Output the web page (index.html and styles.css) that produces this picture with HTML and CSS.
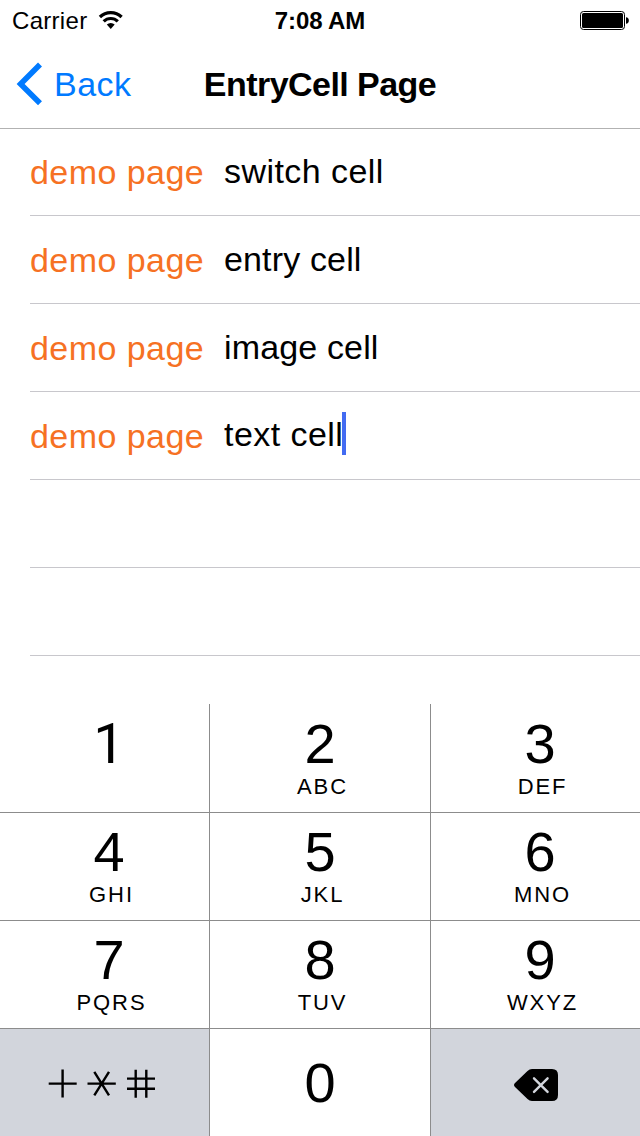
FILE: index.html
```html
<!DOCTYPE html>
<html lang="en">
<head>
<meta charset="utf-8">
<title>EntryCell Page</title>
<link rel="stylesheet" href="styles.css">
</head>
<body>
<div class="screen">
  <header class="header">
    <div class="status">
      <div class="status-left">
        <span class="carrier">Carrier</span>
        <svg class="wifi" width="26" height="20" viewBox="0 0 26 20">
          <g fill="none" stroke="#000" stroke-width="3.2">
            <path d="M1.9 7a15.400 15.400 0 0 1 21.700 0"/>
            <path d="M5.700 11.400a10 10 0 0 1 14.100 0"/>
          </g>
          <path d="M8.800 14.600a5.900 5.900 0 0 1 7.900 0L12.750 18.900z"/>
        </svg>
      </div>
      <div class="clock">7:08 AM</div>
      <div class="status-right">
        <svg width="50" height="20" viewBox="0 0 50 20">
          <rect x=".5" y=".5" width="44" height="18" rx="3" fill="none" stroke="#000"/>
          <rect x="2" y="2" width="41" height="15" rx="1.5"/>
          <path d="M46 6.2c3.8 0 3.8 6.6 0 6.6z"/>
        </svg>
      </div>
    </div>
    <nav class="nav">
      <a class="back">
        <svg width="27" height="44" viewBox="0 0 27 44"><path d="M25 2.500L5.600 21.900L25 41.300" fill="none" stroke="#007aff" stroke-width="5.600"/></svg>
        <span>Back</span>
      </a>
      <h1 class="title">EntryCell Page</h1>
    </nav>
  </header>
  <main class="table">
    <div class="row"><span class="label">demo page</span><span class="entry">switch cell</span></div>
    <div class="row"><span class="label">demo page</span><span class="entry tight">entry cell</span></div>
    <div class="row"><span class="label">demo page</span><span class="entry tight">image cell</span></div>
    <div class="row"><span class="label">demo page</span><span class="entry editing">text cell</span><span class="caret"></span></div>
    <div class="row"></div>
    <div class="row"></div>
  </main>
  <section class="keypad">
    <div class="key left"><span class="digit one">1</span></div>
    <div class="key"><span class="digit">2</span><span class="letters">ABC</span></div>
    <div class="key right"><span class="digit">3</span><span class="letters">DEF</span></div>
    <div class="key left"><span class="digit">4</span><span class="letters">GHI</span></div>
    <div class="key"><span class="digit">5</span><span class="letters">JKL</span></div>
    <div class="key right"><span class="digit">6</span><span class="letters">MNO</span></div>
    <div class="key left"><span class="digit">7</span><span class="letters">PQRS</span></div>
    <div class="key"><span class="digit">8</span><span class="letters">TUV</span></div>
    <div class="key right"><span class="digit">9</span><span class="letters">WXYZ</span></div>
    <div class="key gray symbols">
      <svg width="108" height="30" viewBox="0 0 108 30">
        <g fill="none" stroke="#000" stroke-width="2.4">
          <path d="M.7 14.600h28M14.600 .6v28"/>
          <path d="M39.500 14.600h28.300M46.300 2.800l14.700 23.600M61 2.800L46.300 26.400"/>
          <path d="M79 9.600h28M79 19.700h28M87.700 .8v28M98.300 .8v28"/>
        </g>
      </svg>
    </div>
    <div class="key zero"><span class="digit">0</span></div>
    <div class="key gray delete">
      <svg width="44" height="32" viewBox="0 0 44 32">
        <path d="M18 0h20q6 0 6 6v20q0 6-6 6H18q-2.500 0-4.500-2L1 18q-2-2 0-4L13.500 2Q15.500 0 18 0z"/>
        <path d="M20 9.300l13.600 13.600M33.600 9.300L20 22.900" fill="none" stroke="#d2d5dc" stroke-width="2.400" stroke-linecap="round"/>
      </svg>
    </div>
  </section>
</div>
</body>
</html>
```
FILE: styles.css
```css
* { box-sizing: border-box; }
body {
  margin: 0;
  background: #fff;
  color: #000;
  font-family: "Liberation Sans", Arial, sans-serif;
}
.screen {
  width: 640px;
  height: 1136px;
  display: flex;
  flex-direction: column;
  overflow: hidden;
}
.header {
  height: 129px;
  flex: none;
  margin-bottom: -1px;
  border-bottom: 1px solid #b2b2b2;
}
.status {
  height: 40px;
  display: grid;
  grid-template-columns: 1fr auto 1fr;
  font-size: 24px;
  line-height: 41px;
}
.status-left { display: flex; padding-left: 12px; }
.carrier { width: 86px; letter-spacing: .3px; }
.wifi { margin-top: 10px; }
.clock { font-weight: 700; letter-spacing: -.1px; }
.status-right { display: flex; justify-content: flex-end; padding: 11px 10px 0 0; }
.nav {
  height: 88px;
  display: grid;
  grid-template-columns: 1fr auto 1fr;
  font-size: 34px;
  line-height: 88px;
}
.back {
  display: flex;
  align-items: center;
  padding-left: 15px;
  color: #007aff;
}
.back span { margin-left: 12px; letter-spacing: .5px; }
.title {
  margin: 0;
  font-size: 34px;
  font-weight: 700;
  letter-spacing: -.55px;
}
.table { height: 576px; flex: none; padding-left: 30px; }
.row {
  display: flex;
  height: 88px;
  border-bottom: 1px solid #c8c7cc;
  font-size: 34px;
  letter-spacing: .45px;
}
.label { width: 194px; color: #f67123; line-height: 88px; }
.entry { line-height: 86px; }
.entry.tight { letter-spacing: .15px; }
.entry.editing { line-height: 84px; width: 118px; white-space: nowrap; }
.caret { width: 4px; height: 43px; margin-top: 20px; background: #426bf2; }
.keypad {
  height: 432px;
  display: grid;
  grid-template-columns: 210px 221px 209px;
  grid-template-rows: repeat(4, 108px);
}
.key {
  display: flex;
  flex-direction: column;
  align-items: center;
  padding-top: 9px;
  border-top: 1px solid #8c8c8c;
  border-right: 1px solid #8c8c8c;
}
.key:nth-child(-n+3) { border-top: 0; padding-top: 10px; }
.key:nth-child(3n) { border-right: 0; }
.left { padding-left: 9px; }
.right { padding-left: 9px; }
.digit { font-size: 56px; line-height: 60px; }
.one { font-family: Roboto, sans-serif; }
.letters {
  font-size: 22px;
  line-height: 26px;
  letter-spacing: 1.9px;
  padding-left: 5px;
}
.gray { background: #d2d5dc; }
.symbols { align-items: flex-start; padding: 40px 0 0 48px; }
.zero .digit { line-height: 90px; }
.delete { align-items: flex-start; padding: 40px 0 0 83px; }
```
